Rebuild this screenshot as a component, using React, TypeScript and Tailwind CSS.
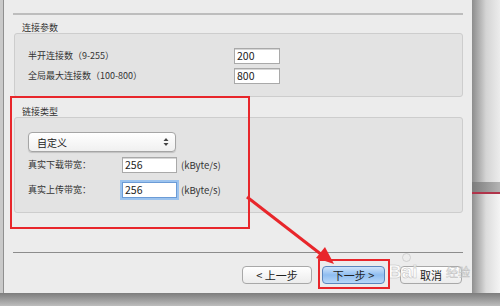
import React from "react";

const cjk = { fontFamily: '"Noto Sans CJK SC", "Liberation Sans", sans-serif' };

function Input({ value, focused }: { value: string; focused?: boolean }) {
  return (
    <div
      className={
        "h-[16px] bg-white flex items-center pl-[2px] text-[10.5px] leading-none text-[#222] " +
        (focused
          ? "border border-[#6b9bd6] shadow-[0_0_0_2px_#9cc3ee]"
          : "border border-[#a9a9a9] shadow-[inset_0_1px_0_#d6d6d6]")
      }
      style={cjk}
    >
      {value}
    </div>
  );
}

function Btn({ children, primary, w }: { children: React.ReactNode; primary?: boolean; w: string }) {
  return (
    <div
      className={
        "h-[18px] rounded-[4px] flex items-center justify-center text-[11px] text-[#222] " +
        w +
        " " +
        (primary
          ? "border border-[#5b86bd] bg-gradient-to-b from-[#cfe4fa] via-[#8fbdf0] to-[#b8d8f8]"
          : "border border-[#a8a8a8] bg-gradient-to-b from-[#ffffff] to-[#ececec]")
      }
      style={cjk}
    >
      {children}
    </div>
  );
}

export default function App() {
  return (
    <div className="relative w-[500px] h-[306px] overflow-hidden bg-[#c9c9c9]" style={cjk}>
      {/* desktop right strip */}
      <div className="absolute left-[472px] top-0 w-[28px] h-[306px] bg-gradient-to-r from-[#8d8d8d] via-[#d4d4d4] to-[#ececec]" />
      <div className="absolute left-[472px] top-[182px] w-[28px] h-[11px] bg-gradient-to-r from-[#7c7c7c] to-[#b4b4b4]" />
      <div className="absolute left-[472px] top-[192px] w-[28px] h-[2px] bg-[#b0344a]" />
      <div className="absolute left-[472px] top-[194px] w-[28px] h-[112px] bg-gradient-to-r from-[#8f8f8f] via-[#dcdcdc] to-[#f4f4f4]" />
      {/* bottom shadow */}
      <div className="absolute left-0 top-[293px] w-[500px] h-[13px] bg-gradient-to-b from-[#7d7d7d] to-[#bdbdbd]" />

      {/* window */}
      <div className="absolute left-[3px] top-0 w-[469px] h-[293px] bg-[#ececec] border-l border-[#8f8f8f] px-[9px] pt-[13px] flex flex-col">
        <div className="h-[2px] bg-[#bdbdbd]" />
        <div className="pt-[7px] pl-[9px] text-[9px] leading-[11px] text-[#333]">连接参数</div>
        <div className="ml-[1px] border border-[#cdcdcd] rounded-[3px] bg-[#e3e3e3] pt-[14px] pb-[12px] pl-[13px] flex flex-col gap-[4px]">
          <div className="flex items-center h-[16px]">
            <div className="w-[206px] text-[9px] text-[#333]">半开连接数（9-255）</div>
            <div className="w-[46px]">
              <Input value="200" />
            </div>
          </div>
          <div className="flex items-center h-[16px]">
            <div className="w-[206px] text-[9px] text-[#333]">全局最大连接数（100-800）</div>
            <div className="w-[46px]">
              <Input value="800" />
            </div>
          </div>
        </div>

        <div className="pt-[9px] pl-[9px] text-[9px] leading-[11px] text-[#333]">链接类型</div>
        <div className="ml-[1px] border border-[#cdcdcd] rounded-[3px] bg-[#e3e3e3] pt-[14px] pb-[14px] pl-[13px] flex flex-col">
          <div className="w-[148px] h-[20px] rounded-[4px] border border-[#a5a5a5] bg-gradient-to-b from-[#ffffff] to-[#f0f0f0] shadow-[0_1px_1px_rgba(0,0,0,0.15)] flex items-center justify-between pl-[8px] pr-[6px]">
            <span className="text-[10px] text-[#222]">自定义</span>
            <svg width="6" height="10" viewBox="0 0 6 10">
              <path d="M0.5 4 L3 1 L5.5 4 Z" fill="#444" />
              <path d="M0.5 6 L3 9 L5.5 6 Z" fill="#444" />
            </svg>
          </div>
          <div className="flex items-center h-[16px] mt-[5px]">
            <div className="w-[94px] text-[9px] text-[#333]">真实下载带宽：</div>
            <div className="w-[55px]">
              <Input value="256" />
            </div>
            <div className="ml-[4px] text-[9.5px] text-[#333]">(kByte/s)</div>
          </div>
          <div className="flex items-center h-[16px] mt-[9px]">
            <div className="w-[94px] text-[9px] text-[#333]">真实上传带宽：</div>
            <div className="w-[55px]">
              <Input value="256" focused />
            </div>
            <div className="ml-[4px] text-[9.5px] text-[#333]">(kByte/s)</div>
          </div>
        </div>

        <div className="mt-[39px] h-[1px] bg-[#8c8c8c]" />
        <div className="mt-[13px] flex justify-end pr-[1px]">
          <Btn w="w-[70px]">&lt; 上一步</Btn>
          <div className="w-[10px]" />
          <Btn w="w-[63px]" primary>
            下一步 &gt;
          </Btn>
          <div className="w-[15px]" />
          <Btn w="w-[62px]">取消</Btn>
        </div>
      </div>

      {/* watermark */}
      <div className="absolute left-[388px] top-[262px] text-white opacity-80 [-webkit-text-stroke:0.5px_#b5b5b5] text-[19px] font-bold leading-none" style={{ fontFamily: '"Liberation Sans", sans-serif' }}>
        Bai
      </div>
      <div className="absolute left-[402px] top-[253px] w-[9px] h-[9px] rounded-full border border-[#c4c4c4] opacity-70" />
      <div className="absolute left-[446px] top-[266px] text-white opacity-80 [-webkit-text-stroke:0.5px_#b5b5b5] text-[12px] leading-none">
        经验
      </div>

      {/* annotation boxes */}
      <div className="absolute left-[10px] top-[96px] w-[240px] h-[133px] border-2 border-[#e8262b]" />
      <div className="absolute left-[318px] top-[259px] w-[72px] h-[30px] border-2 border-[#e8262b]" />

      {/* arrow */}
      <svg className="absolute left-0 top-0" width="500" height="306" viewBox="0 0 500 306">
        <line x1="247" y1="197" x2="322" y2="255" stroke="#e8262b" strokeWidth="3" />
        <polygon points="334,264 316,258 325,247" fill="#e8262b" />
      </svg>
    </div>
  );
}
